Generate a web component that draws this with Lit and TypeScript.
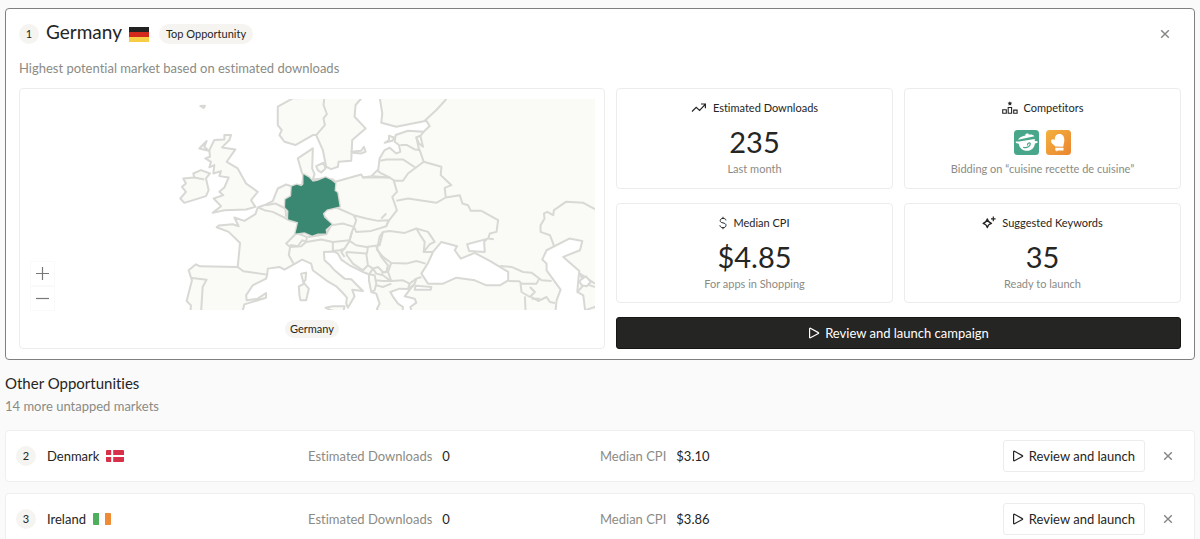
import { LitElement, html, svg, css } from "lit";
import { customElement } from "lit/decorators.js";

const LAND = [
  // European mainland
  "62,680 65,645 52,632 68,570 58,540 80,522 92,528 205,530 212,458 178,425 142,411 148,406 190,402 208,408 195,382 225,392 258,372 265,352 290,343 310,333 325,295 350,283 370,290 398,284 402,255 398,250 385,205 430,175 428,235 435,252 430,268 460,265 490,268 497,275 575,253 580,262 605,258 626,238 630,205 645,180 660,173 680,190 692,185 688,165 675,155 678,135 715,122 762,125 780,108 770,92 680,110 635,98 638,70 628,10 1300,10 1300,700 735,700 722,650 740,637 735,625 705,618 730,585 715,596 690,595 662,605 672,622 685,640 700,650 695,700 640,700 622,655 630,640 620,610 605,605 598,570 598,552 580,545 540,525 515,508 505,490 495,484 463,485 465,510 482,525 495,540 525,565 545,567 580,602 548,598 555,618 535,652 530,640 532,622 520,608 500,588 470,570 430,540 425,520 398,508 345,538 330,530 295,535 293,555 290,565 250,585 230,615 232,630 265,625 290,608 290,622 225,642 215,680",
  // Scandinavia
  "370,25 325,50 325,105 337,120 330,135 345,155 378,165 430,135 440,135 460,180 470,230 485,237 505,230 507,215 545,212 548,150 588,115 555,80 558,45 580,20",
  // Great Britain
  "165,135 185,135 180,150 158,172 198,178 172,215 205,235 230,280 265,305 245,330 258,350 230,358 165,360 130,368 155,348 133,325 162,315 150,305 165,292 178,262 150,258 155,243 132,250 135,225 120,232 125,215 108,205 122,200 120,180 135,150 165,148",
  // Ireland
  "42,265 75,262 72,250 95,240 122,250 110,265 118,300 110,318 45,338 33,325 50,305 38,290 50,280",
  "90,175 112,153 105,170 118,182",
  "440,228 462,218 468,235 455,247 445,240",
  "545,185 575,182 583,170 588,185 575,190 550,188",
  "93,48 107,47 103,54",
  "645,158 658,150 658,137 675,143 668,152",
  "395,550 410,547 408,568 402,578",
  "388,588 405,580 418,595 410,630 393,630 390,615",
  "468,652 490,648 525,648 520,670 480,658",
];

const WATER = [
  // Black Sea, Azov, Caspian, Marmara
  "755,550 775,518 790,485 815,455 862,468 855,480 873,505 915,488 960,512 990,530 1015,545 1015,570 990,585 950,585 915,570 860,562 820,580 775,580",
  "892,462 952,446 943,455 945,485 898,482",
  "1130,480 1198,445 1237,452 1230,480 1180,500 1228,542 1225,570 1222,605 1240,615 1248,680 1155,680 1160,630 1172,598 1130,540 1130,520 1117,508",
  "738,586 785,590 783,598 735,598",
  "740,142 752,138 760,170 748,160",
  "1228,572 1248,558 1262,575 1250,588 1235,585",
];

const BORDERS = [
  "465,20 462,45 472,72 462,85 466,105 440,135",
  "830,27 800,60 765,92",
  "762,125 752,138 740,142 748,178 750,180 762,215",
  "692,165 712,165 735,178 750,180",
  "632,212 650,208 700,208 738,233 762,215 815,230 813,255 845,285 825,293 828,320",
  "738,233 715,250 700,272 675,272 660,262",
  "610,258 660,262 632,248 622,240",
  "660,262 580,262",
  "672,270 682,305 668,320 680,355 682,360 655,395 650,408",
  "680,332 715,325 800,338 828,322 870,315 878,340 895,345 903,362 935,362 985,390 980,425 960,430 955,445 972,447",
  "640,425 660,422 705,428 740,415 775,425 795,455 780,462 762,485 790,485",
  "740,415 755,440 765,455 762,485",
  "640,425 630,440 622,478 640,500 665,518 710,520 740,512 768,520",
  "665,518 655,545 665,572 700,570 720,580 740,565 755,560",
  "720,580 715,596 M 740,565 735,580 728,590",
  "68,563 112,568 100,590 95,670",
  "205,530 222,543 293,553",
  "266,352 285,360 310,365 345,382 358,390 388,397 380,430",
  "290,345 318,340 348,355 350,380",
  "380,430 350,460 362,470 358,495 372,520",
  "362,464 385,468 398,450 410,455 412,440 385,430",
  "362,470 395,468 410,455 455,448 490,455 540,450 547,425 553,410 520,400 485,405 470,432 415,440",
  "485,405 460,372 470,358 500,352 552,375 560,390 553,410 560,425 605,422 650,408 658,390 625,392 590,385 552,375",
  "500,352 508,345",
  "547,425 540,452 560,465 590,470 630,465 640,425",
  "490,455 490,482 510,480 525,475 540,452",
  "525,475 515,485 525,500",
  "530,485 590,490 595,525 580,540 550,520 532,495 530,485",
  "595,470 592,490 M 620,470 635,500 655,525 650,545 635,548",
  "595,525 610,535 600,550 M 610,535 625,530 640,545 655,545 M 610,535 620,550 640,555 660,570",
  "598,552 615,555 620,580 615,600 608,603 M 618,570 640,572 665,572 M 620,585 640,590 665,580",
  "990,527 1025,530 1060,545 1085,547 1115,570 1145,572",
  "1015,572 1048,573 1055,580 1100,580 1108,565",
  "1052,580 1055,605 1080,620 1095,605 1080,590 M 1085,620 1105,632 1130,620 1140,635 1155,638",
  "1065,618 1068,680 M 1085,625 1110,625",
  "1154,478 1150,460 1140,435 1112,425 1112,405 1124,385 1122,370 1132,365 1150,375 1152,360 1188,335 1240,338 1275,357",
  "1222,605 1245,580 1275,590 M 1240,572 1230,550 1275,580 M 1245,660 1280,648",
  "650,370 635,385 M 75,262 105,268",
];

const GERMANY =
  "402,253 418,262 430,275 445,272 468,262 485,270 497,280 495,302 503,308 510,349 472,358 460,370 464,382 486,402 468,418 470,430 445,430 428,436 405,426 378,430 386,396 356,387 357,362 347,352 348,328 365,318 367,289 382,284 396,288 402,282";

type Row = { rank: number; name: string; flag: string; downloads: string; cpi: string };

const ROWS: Row[] = [
  { rank: 2, name: "Denmark", flag: "dk", downloads: "0", cpi: "$3.10" },
  { rank: 3, name: "Ireland", flag: "ie", downloads: "0", cpi: "$3.86" },
];

const closeIcon = html`<svg width="10" height="10" viewBox="0 0 10 10" aria-hidden="true">
  <path d="M1.2 1.2 8.8 8.8M8.8 1.2 1.2 8.8" fill="none" stroke="currentColor" stroke-width="1.4" />
</svg>`;

const playIcon = html`<svg width="12" height="12" viewBox="0 0 12 12" aria-hidden="true">
  <path d="M1.6 1.6v8.8c0 .4.4.6.8.4l8-4.3c.4-.2.4-.7 0-.9l-8-4.4c-.4-.2-.8 0-.8.4z" fill="none" stroke="currentColor" stroke-width="1.2" stroke-linejoin="round" />
</svg>`;

const trendIcon = html`<svg width="16" height="12" viewBox="0 0 16 12" aria-hidden="true">
  <path d="M1 9.5 5.2 5.3 8.6 8.4 14.2 2.3M10 2h4.4v4.2" fill="none" stroke="currentColor" stroke-width="1.2" />
</svg>`;

const podiumIcon = html`<svg width="16" height="14" viewBox="0 0 16 14" aria-hidden="true">
  <path d="M.7 8.700h3.600v3.600H.700zM6.200 6.500h3.400v5.800H6.200zM11.700 9.100h3.400v3.200h-3.400z" fill="none" stroke="currentColor" stroke-width="1.1" />
  <path d="M7.900.2 8.600 1.600l1.600.2-1.200 1.100.4 1.700-1.500-.9-1.500.9.4-1.700-1.200-1.100 1.600-.2z" fill="currentColor" />
</svg>`;

const dollarIcon = html`<svg width="8" height="14" viewBox="0 0 8 14" aria-hidden="true">
  <path d="M4 .8v1.800M4 11.400v1.800M7 4.400C6.800 3 5.700 2.400 4.100 2.400S1.200 3.200 1.200 4.600s1 1.900 2.800 2.300 3 .9 3 2.400-1.300 2.400-3 2.400S1.100 10.900.9 9.300" fill="none" stroke="currentColor" stroke-width="1" />
</svg>`;

const sparkIcon = html`<svg width="14" height="14" viewBox="0 0 14 14" aria-hidden="true">
  <path d="M5.300 3c.6 2.600 1.600 3.600 4.200 4.300-2.600.7-3.600 1.700-4.200 4.300C4.700 9 3.700 8 1.100 7.300 3.700 6.600 4.700 5.600 5.300 3z" fill="none" stroke="currentColor" stroke-width="1.3" stroke-linejoin="round" />
  <path d="M11.300.6v4.600M9 2.900h4.600" fill="none" stroke="currentColor" stroke-width="1.2" />
</svg>`;

const potIcon = html`<svg class="app" viewBox="0 0 25 25" role="img" aria-label="Cooking pot app">
  <rect width="25" height="25" rx="3.5" fill="#48a78a" />
  <path d="M4.200 9.800 20.500 6.200c-1.400-1.700-3.600-2-5.700-1.600L14 3.300l-2.600.6.1 1.500C8.500 6.100 5 7 4.200 9.800z" fill="#fff" />
  <path d="M5 11.600 20.800 9v2l2.700.3v1.500l-2.600.7c-.2 4.100-3.300 7.300-8 7.300-4.500 0-7.600-2.700-8.100-7L1.800 13v-1.600z" fill="#fff" />
  <path d="M9.600 17.300c3.600.9 7-1.300 6.700-3.600-.8-1.500-3.400-.2-2.700 1.300" fill="none" stroke="#48a78a" stroke-width="1.2" stroke-linecap="round" />
</svg>`;

const mittIcon = html`<svg class="app" viewBox="0 0 25 25" role="img" aria-label="Oven mitt app">
  <defs>
    <linearGradient id="mitt" x1="0" y1="0" x2="1" y2="1">
      <stop offset="0" stop-color="#f3b13f" />
      <stop offset="1" stop-color="#ea8530" />
    </linearGradient>
  </defs>
  <rect width="25" height="25" rx="3.5" fill="url(#mitt)" />
  <path d="M9.500 16.500 6.700 14c-1.600-1.300-2.100-3-1.200-4.200.8-.9 2-.8 3.200.4C8.600 6.600 10 4 13.400 4c3.500 0 5 2.600 4.900 6.200 0 2.500-.7 4.300-1.100 6.500z" fill="#fff" />
  <path d="M9.300 17.800h8.200v2.800H12l-1.500 1-.2-1h-1z" fill="#fff" />
</svg>`;

function flag(code: string) {
  if (code === "de") {
    return html`<svg class="flag large" viewBox="0 0 20 15" role="img" aria-label="Flag of Germany">
      <path d="M0 0h20v5H0z" fill="#222" /><path d="M0 5h20v5H0z" fill="#d3281c" /><path d="M0 10h20v5H0z" fill="#f8cd46" />
    </svg>`;
  }
  if (code === "dk") {
    return html`<svg class="flag" viewBox="0 0 18 12" role="img" aria-label="Flag of Denmark">
      <rect width="18" height="12" rx="1" fill="#d8304b" /><path d="M0 6h18M6.200 0v12" stroke="#fff" stroke-width="2" />
    </svg>`;
  }
  return html`<svg class="flag" viewBox="0 0 18 12" role="img" aria-label="Flag of Ireland">
    <rect width="18" height="12" rx="1" fill="#fff" /><path d="M1 0h5v12H1a1 1 0 0 1-1-1V1a1 1 0 0 1 1-1z" fill="#4fae5c" />
    <path d="M12 0h5a1 1 0 0 1 1 1v10a1 1 0 0 1-1 1h-5z" fill="#ee8b34" />
  </svg>`;
}

@customElement("europe-map")
class EuropeMap extends LitElement {
  static styles = css`
    :host { display: block; }
    .map { display: block; width: 100%; height: auto; }
    .land { fill: #fafaf7; stroke: #d8d8d5; stroke-width: 6; stroke-linejoin: round; }
    .water { fill: #fff; stroke: #d8d8d5; stroke-width: 6; stroke-linejoin: round; }
    .border { fill: none; stroke: #d8d8d5; stroke-width: 6; stroke-linejoin: round; }
    .halo { fill: none; stroke: #d8d8d5; stroke-width: 8; stroke-linejoin: round; }
    .active { fill: #3a8871; }
  `;

  render() {
    return html`<svg class="map" viewBox="-420 27 1695 633" role="img" aria-label="Map of Europe with Germany highlighted">
      ${LAND.map((p) => svg`<polygon class="land" points=${p} />`)}
      ${BORDERS.map((p) => svg`<path class="border" d=${"M " + p} />`)}
      ${WATER.map((p) => svg`<polygon class="water" points=${p} />`)}
      <polygon class="halo" points=${GERMANY} />
      <polygon class="active" points=${GERMANY} />
    </svg>`;
  }
}

@customElement("app-root")
class AppRoot extends LitElement {
  static styles = css`
    :host {
      display: block;
      box-sizing: border-box;
      min-height: 100vh;
      padding: 8px 5px 0;
      background: #fafafa;
      color: #252523;
      font-family: Lato, "Open Sans", sans-serif;
      font-size: 13px;
      line-height: 18px;
      font-variant-ligatures: none;
    }
    * { box-sizing: border-box; }
    h1, h2, h3, p { margin: 0; font-weight: 400; }
    button { font: inherit; color: inherit; cursor: pointer; }
    svg { display: block; flex: none; }
    .featured {
      padding: 10px 13px;
      background: #fff;
      border: 1px solid #80807e;
      border-radius: 4px;
    }
    .heading { display: flex; align-items: center; height: 30px; }
    .rank {
      display: grid;
      place-items: center;
      flex: none;
      width: 20px;
      height: 20px;
      border-radius: 50%;
      background: #f5f4f0;
      font-size: 11px;
    }
    .title { margin: 0 7px; padding-bottom: 4px; font-size: 19px; line-height: 24px; }
    .pill {
      padding: 0 7px;
      border-radius: 10px;
      background: #f5f4f0;
      font-size: 11px;
      line-height: 20px;
    }
    .heading .pill { margin-left: 10px; }
    .flag { width: 18px; height: 12px; }
    .flag.large { width: 20px; height: 15px; }
    .close {
      display: grid;
      place-items: center;
      width: 24px;
      height: 24px;
      padding: 0;
      border: 0;
      background: none;
      color: #858581;
    }
    .heading .close { margin-left: auto; margin-right: 4px; }
    .muted { color: #8b8b85; }
    .lead { margin-top: 10px; }
    .body { display: grid; grid-template-columns: 586fr 565fr; gap: 11px; margin-top: 11px; }
    .panel, .stat { background: #fff; border: 1px solid #ececea; border-radius: 4px; }
    .panel {
      position: relative;
      display: flex;
      flex-direction: column;
      align-items: center;
      gap: 10px;
      padding: 10px 9px;
    }
    .panel europe-map { width: 100%; }
    .panel .pill { padding: 0 5px; line-height: 18px; }
    .zoom {
      position: absolute;
      left: 10px;
      bottom: 37px;
      display: flex;
      flex-direction: column;
      background: #fff;
    }
    .zoom button {
      display: grid;
      place-items: center;
      width: 25px;
      height: 25px;
      padding: 0;
      border: 1px solid #fafafa;
      background: none;
      color: #777;
    }
    .side { display: grid; grid-template-rows: 1fr 1fr auto; gap: 14px; }
    .pair { display: grid; grid-template-columns: 1fr 1fr; gap: 11px; }
    .stat {
      display: flex;
      flex-direction: column;
      align-items: center;
      padding-top: 10px;
      font-size: 11px;
    }
    .label { display: flex; align-items: center; gap: 6px; height: 18px; }
    .value { height: 35px; margin-top: 8px; font-size: 29px; line-height: 34px; }
    .apps { display: flex; align-items: center; gap: 7px; height: 35px; margin-top: 8px; }
    .app { width: 25px; height: 25px; }
    .primary {
      display: flex;
      align-items: center;
      justify-content: center;
      gap: 5px;
      height: 32px;
      padding: 0;
      border: 1px solid #161614;
      border-radius: 3px;
      background: #252523;
      color: #fff;
    }
    .others { margin: 13px 0 15px; }
    .others h2 { font-size: 15px; line-height: 20px; }
    .others p { margin-top: 4px; }
    .list { display: grid; gap: 11px; margin: 0; padding: 0; list-style: none; }
    .row {
      display: grid;
      grid-template-columns: repeat(4, 1fr);
      align-items: center;
      height: 52px;
      padding: 0 10px;
      background: #fff;
      border: 1px solid #efefed;
      border-radius: 4px;
    }
    .cell { display: flex; align-items: center; }
    .metric { gap: 10px; }
    .country { margin: 0 7px 0 11px; font-size: 13px; line-height: 18px; }
    .actions { justify-content: flex-end; gap: 11px; padding-right: 4px; }
    .secondary {
      display: flex;
      align-items: center;
      gap: 5px;
      height: 32px;
      padding: 0 9px 0 8px;
      border: 1px solid #ececea;
      border-radius: 3px;
      background: #fff;
      white-space: nowrap;
    }
  `;

  row(r: Row) {
    return html`<li class="row">
      <div class="cell"><span class="rank">${r.rank}</span><h3 class="country">${r.name}</h3>${flag(r.flag)}</div>
      <div class="cell metric"><span class="muted">Estimated Downloads</span><span>${r.downloads}</span></div>
      <div class="cell metric"><span class="muted">Median CPI</span><span>${r.cpi}</span></div>
      <div class="cell actions">
        <button class="secondary">${playIcon}Review and launch</button>
        <button class="close" aria-label="Dismiss ${r.name}">${closeIcon}</button>
      </div>
    </li>`;
  }

  render() {
    return html`
      <section class="featured">
        <div class="heading">
          <span class="rank">1</span>
          <h1 class="title">Germany</h1>
          ${flag("de")}
          <span class="pill">Top Opportunity</span>
          <button class="close" aria-label="Dismiss Germany">${closeIcon}</button>
        </div>
        <p class="lead muted">Highest potential market based on estimated downloads</p>
        <div class="body">
          <div class="panel">
            <europe-map></europe-map>
            <span class="pill">Germany</span>
            <div class="zoom">
              <button aria-label="Zoom in">
                <svg width="13" height="13" viewBox="0 0 13 13"><path d="M0 6.500h13M6.500 0v13" stroke="currentColor" stroke-width="1.2" /></svg>
              </button>
              <button aria-label="Zoom out">
                <svg width="13" height="13" viewBox="0 0 13 13"><path d="M0 6.500h13" stroke="currentColor" stroke-width="1.2" /></svg>
              </button>
            </div>
          </div>
          <div class="side">
            <div class="pair">
              <div class="stat">
                <div class="label">${trendIcon}Estimated Downloads</div>
                <div class="value">235</div>
                <div class="muted">Last month</div>
              </div>
              <div class="stat">
                <div class="label">${podiumIcon}Competitors</div>
                <div class="apps">${potIcon}${mittIcon}</div>
                <div class="muted">Bidding on “cuisine recette de cuisine”</div>
              </div>
            </div>
            <div class="pair">
              <div class="stat">
                <div class="label">${dollarIcon}Median CPI</div>
                <div class="value">$4.85</div>
                <div class="muted">For apps in Shopping</div>
              </div>
              <div class="stat">
                <div class="label">${sparkIcon}Suggested Keywords</div>
                <div class="value">35</div>
                <div class="muted">Ready to launch</div>
              </div>
            </div>
            <button class="primary">${playIcon}Review and launch campaign</button>
          </div>
        </div>
      </section>
      <header class="others">
        <h2>Other Opportunities</h2>
        <p class="muted">14 more untapped markets</p>
      </header>
      <ul class="list">${ROWS.map((r) => this.row(r))}</ul>
    `;
  }
}
